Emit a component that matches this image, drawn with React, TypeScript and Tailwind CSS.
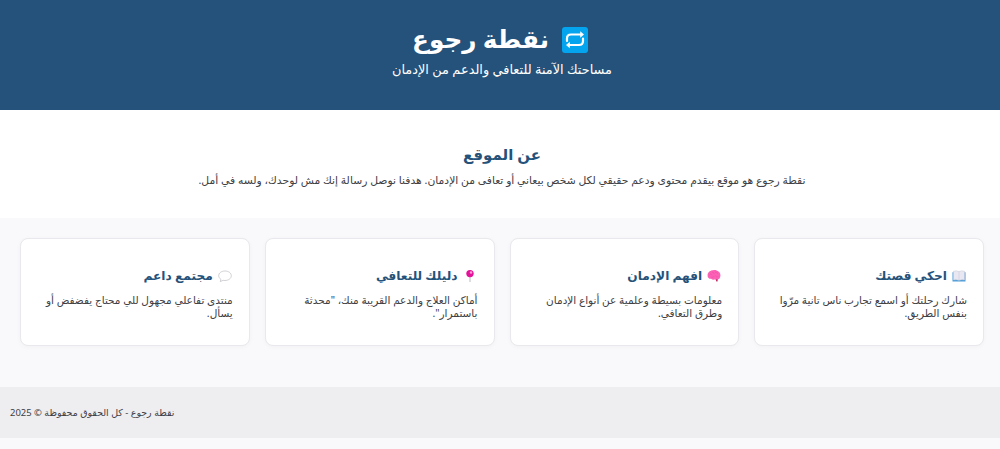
import type { ReactNode } from "react";

function RepeatIcon() {
  return (
    <svg viewBox="0 0 26 26" className="size-[26px] shrink-0" fill="none" aria-hidden="true">
      <rect width="26" height="26" rx="3" fill="#05a4ee" />
      <path d="M5 14V11.500q0-4 4-4h10.500M21 11.500V14q0 4-4 4H6.500" stroke="#fff" strokeWidth="2.200" strokeLinecap="round" />
      <path d="m18.200 4.300 3.800 3.200-3.800 3.200ZM7.800 14.800 4 18l3.800 3.200Z" fill="#fff" />
    </svg>
  );
}

function BookIcon() {
  return (
    <svg viewBox="0 0 14 14" className="size-3.5" aria-hidden="true">
      <path d="M.5 3.200h13v9.300H.5Z" fill="#4a9bd8" />
      <path d="M1.400 2.300Q4.500 1.300 7 2.500q2.500-1.200 5.600-.2v8.600Q9.500 10.200 7 11.300 4.500 10.200 1.400 10.900Z" fill="#e9e8f2" stroke="#c6c8d6" strokeWidth=".5" />
      <path d="M7 2.500v8.800" stroke="#c0c3d2" strokeWidth=".5" />
    </svg>
  );
}

function BrainIcon() {
  return (
    <svg viewBox="0 0 14 14" className="size-3.5" fill="none" aria-hidden="true">
      <path d="M.6 7C.2 4.500 2 2.300 4.300 1.600 6.700.4 10 .9 11.500 2.600c1.800 1.200 2.400 3.700 1.600 5.700-.5 1.400-1.500 2.200-2.800 2.300L7.800 10.600c-1.600.4-3 0-3.700-.8C2.200 10 .8 9 .6 7Z" fill="#fb62b5" />
      <path d="M8.600 10.200h2.200l-.3 2.300H9.400Z" fill="#c41f63" />
      <path d="M2.500 6c1-1.300 2-1 2.700-.2M5 3.200c1.300-.2 2 .5 1.900 1.600M8 3.400c1.300-.6 2.400 0 2.600 1.300M4.300 8c1.200.6 2.400.2 3-.9M8.600 6.600c.3 1.300 1.600 1.700 2.600 1" stroke="#f04aa6" strokeWidth=".6" />
    </svg>
  );
}

function PinIcon() {
  return (
    <svg viewBox="0 0 14 14" className="size-3.5" aria-hidden="true">
      <path d="M7 7v6" stroke="#b3b3bd" strokeWidth=".9" />
      <circle cx="7" cy="4.600" r="3.700" fill="#e3129a" />
      <circle cx="8" cy="3.500" r="1.200" fill="#fba0d6" />
    </svg>
  );
}

function BubbleIcon() {
  return (
    <svg viewBox="0 0 14 14" className="size-3.5" aria-hidden="true">
      <path d="M7 2C3.500 2 .7 4 .7 6.700c0 1.500.9 2.800 2.200 3.700L2.300 12.600l2.800-1.300c.6.100 1.200.2 1.900.2 3.500 0 6.300-2.100 6.300-4.800S10.500 2 7 2Z" fill="#fff" stroke="#bdbdc3" strokeWidth=".7" />
    </svg>
  );
}

const cards: { icon: ReactNode; title: string; text: string }[] = [
  { icon: <BookIcon />, title: "احكي قصتك", text: "شارك رحلتك أو اسمع تجارب ناس تانية مرّوا بنفس الطريق." },
  { icon: <BrainIcon />, title: "افهم الإدمان", text: "معلومات بسيطة وعلمية عن أنواع الإدمان وطرق التعافي." },
  { icon: <PinIcon />, title: "دليلك للتعافي", text: "أماكن العلاج والدعم القريبة منك، \"محدثة باستمرار\"." },
  { icon: <BubbleIcon />, title: "مجتمع داعم", text: "منتدى تفاعلي مجهول للي محتاج يفضفض أو يسأل." },
];

export default function App() {
  return (
    <div dir="rtl" className="min-h-[449px] bg-[#f9f8fb] font-['Noto_Sans','DejaVu_Sans',sans-serif] text-[#404044]">
      <header className="flex h-[110px] flex-col items-center bg-[#24527a] pt-5 text-white">
        <h1 className="flex h-10 items-center gap-[13px] text-[24.700px] leading-9 font-bold">
          <RepeatIcon />
          <span className="pb-0.5">نقطة رجوع</span>
        </h1>
        <p className="-mt-px pl-1 text-[12.900px] leading-5">مساحتك الآمنة للتعافي والدعم من الإدمان</p>
      </header>
      <section className="flex h-[108px] flex-col items-center bg-white pt-8 pl-1">
        <h2 className="text-[15px] leading-6 font-bold text-[#24527a]">عن الموقع</h2>
        <p className="mt-[7px] text-[10.750px] leading-[15px] whitespace-nowrap">
          نقطة رجوع هو موقع بيقدم محتوى ودعم حقيقي لكل شخص بيعاني أو تعافى من الإدمان. هدفنا نوصل رسالة إنك مش لوحدك، ولسه في أمل.
        </p>
      </section>
      <main className="grid grid-cols-4 gap-[15px] py-5 pr-4 pl-5">
        {cards.map(({ icon, title, text }) => (
          <article key={title} className="h-[108px] rounded-lg border border-[#e8e8ed] bg-white px-4 pt-[27px] shadow-[0_1px_5px_#00000008]">
            <h3 className="flex h-5 items-center gap-[5px] pr-px text-[12.200px] leading-5 font-bold text-[#24527a]">
              {icon}
              <span>{title}</span>
            </h3>
            <p className="mt-2 text-[10.500px] leading-[13px]">{text}</p>
          </article>
        ))}
      </main>
      <footer className="mt-[21px] h-[51px] bg-[#eeedf0] px-2.5 pt-[18px] text-left text-[9.450px] leading-4">
        نقطة رجوع - كل الحقوق محفوظة © 2025
      </footer>
    </div>
  );
}
